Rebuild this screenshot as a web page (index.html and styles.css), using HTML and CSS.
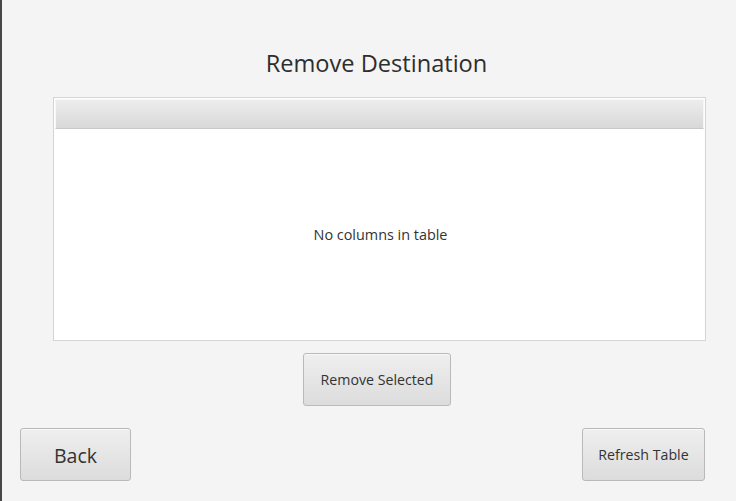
FILE: index.html
```html
<!DOCTYPE html>
<html>
<head>
<meta charset="utf-8">
<link rel="stylesheet" href="styles.css">
</head>
<body>
<div class="app">
  <h1 class="title">Remove Destination</h1>
  <div class="table">
    <div class="table-header"></div>
    <div class="table-body">No columns in table</div>
  </div>
  <div class="center-row">
    <button class="btn btn-remove">Remove Selected</button>
  </div>
  <div class="bottom-row">
    <button class="btn btn-back">Back</button>
    <button class="btn btn-refresh">Refresh Table</button>
  </div>
</div>
</body>
</html>
```

FILE: styles.css
```css
html, body {
  margin: 0;
  padding: 0;
  height: 100%;
}
body {
  background: #f4f4f4;
  font-family: "Open Sans", "Noto Sans", sans-serif;
  color: #333333;
  overflow: hidden;
}
.app {
  height: 100%;
  border-left: 2px solid #474747;
  box-sizing: border-box;
  display: flex;
  flex-direction: column;
}
.title {
  margin: 0;
  padding-top: 47px;
  height: 50px;
  box-sizing: content-box;
  font-size: 23.6px;
  font-weight: 400;
  line-height: 32px;
  text-align: center;
  padding-left: 15px;
  color: #2e2e2e;
}
.table {
  margin-left: 51px;
  width: 653px;
  height: 244px;
  box-sizing: border-box;
  border: 1px solid #d4d4d4;
  background: #ffffff;
  display: flex;
  flex-direction: column;
}
.table-header {
  height: 30px;
  margin: 1px 1px 0 1px;
  box-sizing: border-box;
  background: linear-gradient(#ededed, #d8d8d8);
  border: 1px solid #f6f6f6;
  border-bottom: 1px solid #c9c9c9;
}
.table-body {
  flex: 1;
  display: flex;
  align-items: center;
  justify-content: center;
  font-size: 14.4px;
  padding-left: 2px;
}
.center-row {
  margin-top: 12px;
  padding-left: 301px;
  display: flex;
}
.btn {
  font-family: "Open Sans", "Noto Sans", sans-serif;
  color: #333333;
  border: 1px solid #b9b9b9;
  border-radius: 3px;
  background: linear-gradient(#efefef, #dcdcdc);
  box-shadow: inset 0 1px 0 #f8f8f8;
  padding: 0;
  margin: 0;
  box-sizing: border-box;
  height: 53px;
}
.btn-remove {
  width: 148px;
  font-size: 14.2px;
}
.bottom-row {
  margin-top: 22px;
  padding-left: 18px;
  padding-right: 31px;
  display: flex;
  justify-content: space-between;
}
.btn-back {
  width: 111px;
  font-size: 19.5px;
  padding-top: 2px;
}
.btn-refresh {
  width: 123px;
  font-size: 14.2px;
}
```
